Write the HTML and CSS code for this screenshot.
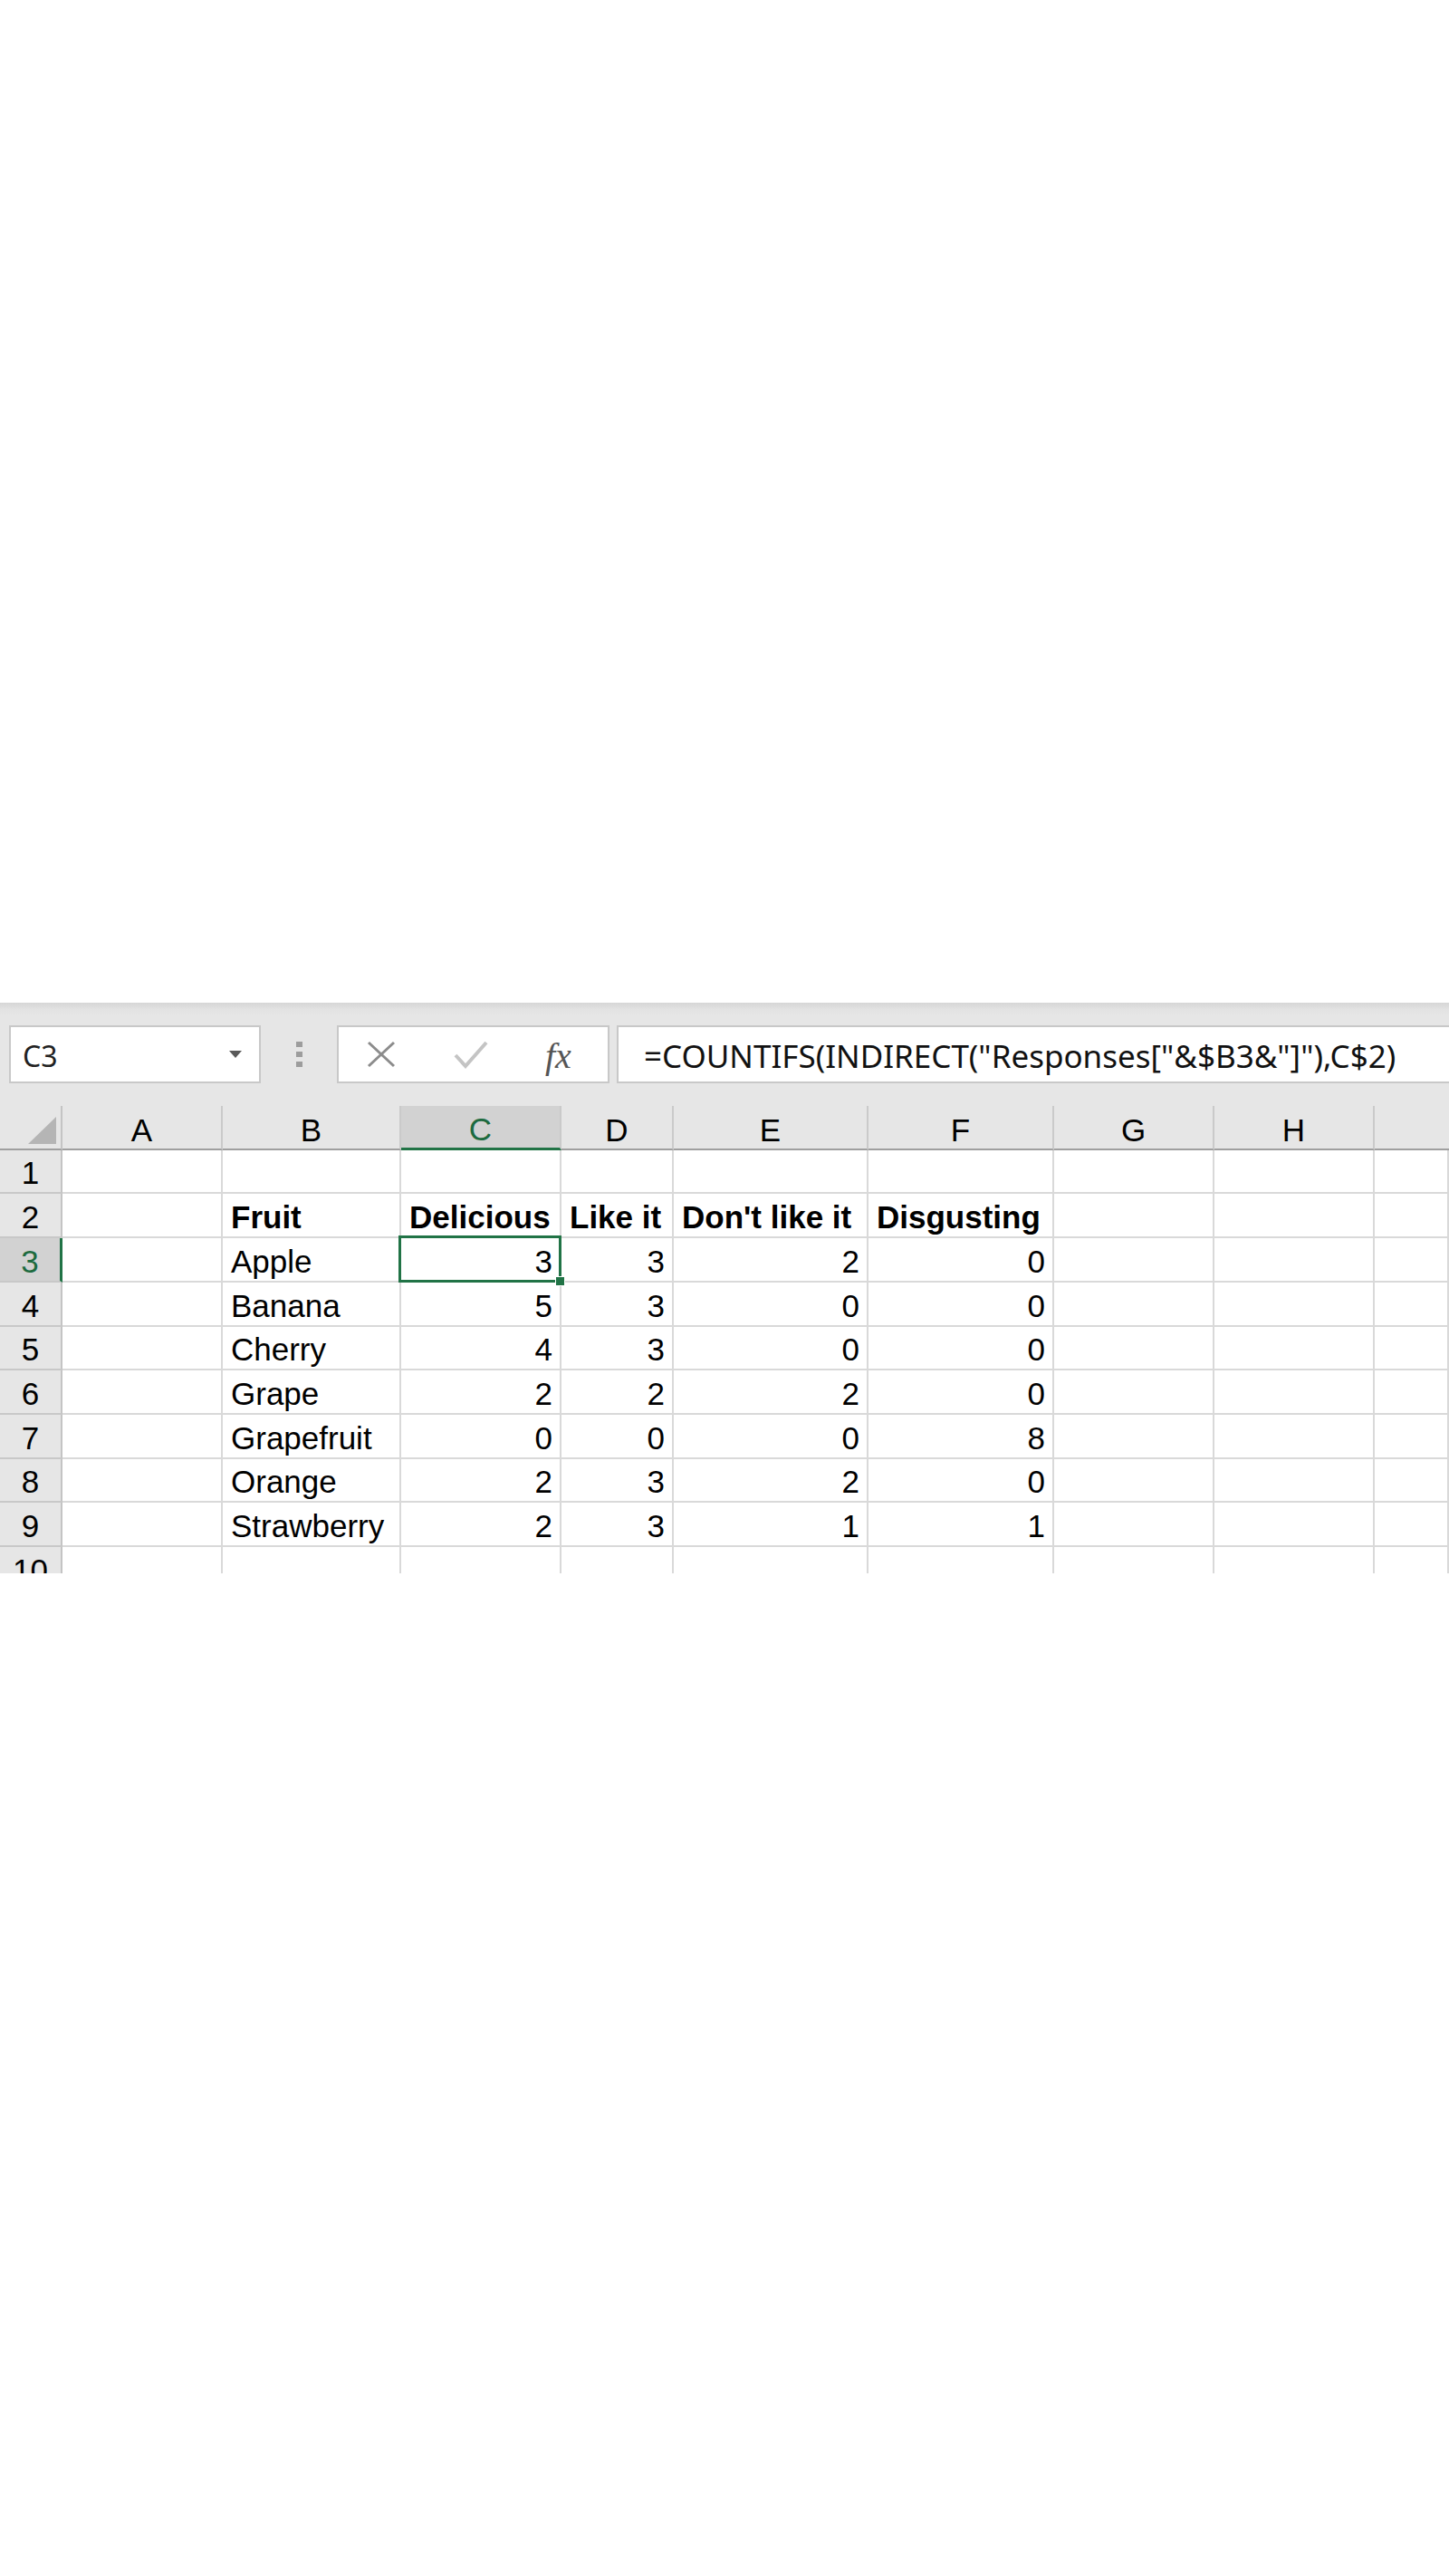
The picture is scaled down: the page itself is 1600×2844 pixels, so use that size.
FILE: index.html
```html
<!DOCTYPE html>
<html>
<head>
<meta charset="utf-8">
<link rel="stylesheet" href="styles.css">
</head>
<body>
<div class="page">
  <div class="spacer"></div>
  <div class="excel">
    <div class="toolbar">
      <div class="namebox">
        <span class="name">C3</span>
        <svg class="caret" width="16" height="10" viewBox="0 0 16 10"><polygon points="1,1 15,1 8,9" fill="#5a5a5a"/></svg>
      </div>
      <div class="grip"><i></i><i></i><i></i></div>
      <div class="fxbox">
        <svg class="ico-x" width="34" height="30" viewBox="0 0 34 30"><path d="M3 2 L31 28 M31 2 L3 28" stroke="#8c8c8c" stroke-width="3" fill="none"/></svg>
        <svg class="ico-ok" width="40" height="32" viewBox="0 0 40 32"><path d="M3 17 L14 29 L37 3" stroke="#c4c4c4" stroke-width="4" fill="none"/></svg>
        <span class="fx">fx</span>
      </div>
      <div class="formula">=COUNTIFS(INDIRECT("Responses["&amp;$B3&amp;"]"),C$2)</div>
    </div>
    <div class="sheet">
      <div class="ch corner"><svg width="69" height="49" viewBox="0 0 69 49"><polygon points="31,42 62,42 62,12" fill="#b5b5b5"/></svg></div>
      <div class="ch">A</div><div class="ch">B</div><div class="ch sel">C</div><div class="ch">D</div><div class="ch">E</div><div class="ch">F</div><div class="ch">G</div><div class="ch">H</div><div class="ch last"></div>

      <div class="rh">1</div><div class="c"></div><div class="c"></div><div class="c"></div><div class="c"></div><div class="c"></div><div class="c"></div><div class="c"></div><div class="c"></div><div class="c"></div>

      <div class="rh">2</div><div class="c"></div><div class="c b">Fruit</div><div class="c b">Delicious</div><div class="c b">Like it</div><div class="c b">Don't like it</div><div class="c b">Disgusting</div><div class="c"></div><div class="c"></div><div class="c"></div>

      <div class="rh sel">3</div><div class="c"></div><div class="c">Apple</div><div class="c n active">3</div><div class="c n">3</div><div class="c n">2</div><div class="c n">0</div><div class="c"></div><div class="c"></div><div class="c"></div>

      <div class="rh">4</div><div class="c"></div><div class="c">Banana</div><div class="c n">5</div><div class="c n">3</div><div class="c n">0</div><div class="c n">0</div><div class="c"></div><div class="c"></div><div class="c"></div>

      <div class="rh">5</div><div class="c"></div><div class="c">Cherry</div><div class="c n">4</div><div class="c n">3</div><div class="c n">0</div><div class="c n">0</div><div class="c"></div><div class="c"></div><div class="c"></div>

      <div class="rh">6</div><div class="c"></div><div class="c">Grape</div><div class="c n">2</div><div class="c n">2</div><div class="c n">2</div><div class="c n">0</div><div class="c"></div><div class="c"></div><div class="c"></div>

      <div class="rh">7</div><div class="c"></div><div class="c">Grapefruit</div><div class="c n">0</div><div class="c n">0</div><div class="c n">0</div><div class="c n">8</div><div class="c"></div><div class="c"></div><div class="c"></div>

      <div class="rh">8</div><div class="c"></div><div class="c">Orange</div><div class="c n">2</div><div class="c n">3</div><div class="c n">2</div><div class="c n">0</div><div class="c"></div><div class="c"></div><div class="c"></div>

      <div class="rh">9</div><div class="c"></div><div class="c">Strawberry</div><div class="c n">2</div><div class="c n">3</div><div class="c n">1</div><div class="c n">1</div><div class="c"></div><div class="c"></div><div class="c"></div>

      <div class="rh">10</div><div class="c"></div><div class="c"></div><div class="c"></div><div class="c"></div><div class="c"></div><div class="c"></div><div class="c"></div><div class="c"></div><div class="c"></div>
    </div>
  </div>
</div>
</body>
</html>
```
FILE: styles.css
```css
* { box-sizing: border-box; }
html, body { margin: 0; padding: 0; background: #ffffff; }
body { width: 1600px; height: 2844px; overflow: hidden; font-family: "Liberation Sans", Arial, sans-serif; }

.page { display: flex; flex-direction: column; }
.spacer { height: 1107px; }

.toolbar {
  height: 114px;
  background: linear-gradient(#d6d6d6 0px, #e3e3e3 8px, #e6e6e6 14px);
  display: flex;
  align-items: flex-start;
  padding: 25px 0 0 10px;
}
.namebox {
  width: 278px; height: 64px;
  background: #fff;
  border: 2px solid #c8c8c8;
  display: flex; align-items: center; justify-content: space-between;
  padding: 3px 18px 0 13px;
  font-family: "Noto Sans", "Open Sans", sans-serif;
  font-size: 32px; color: #222;
}
.caret { margin-top: -3px; }
.grip {
  margin-left: 38px; width: 8px; height: 64px;
  display: flex; flex-direction: column; align-items: center; justify-content: center; gap: 5px;
}
.grip i { display: block; width: 7px; height: 6px; background: #9d9d9d; }
.fxbox {
  margin-left: 38px;
  width: 301px; height: 64px;
  background: #fff;
  border: 2px solid #c8c8c8;
  display: flex; align-items: center;
  padding-left: 30px;
}
.ico-ok { margin-left: 62px; }
.fx {
  margin-left: 62px;
  font-family: "Liberation Serif", "DejaVu Serif", serif;
  font-style: italic;
  font-size: 40px;
  color: #555;
  margin-top: 2px;
}
.formula {
  margin-left: 8px;
  flex: 1;
  height: 64px;
  background: #fff;
  border: 2px solid #c8c8c8;
  border-right: none;
  padding: 7px 0 0 28px;
  font-family: "Noto Sans", "Open Sans", sans-serif;
  font-size: 35px;
  line-height: 50px;
  color: #111;
  white-space: nowrap;
  overflow: hidden;
}

.sheet {
  display: grid;
  grid-template-columns: 69px 177px 197px 177px 124px 215px 205px 177px 177px 82px;
  grid-template-rows: 49px 48px 49px 49px 49px 48px 49px 49px 48px 49px 49px;
  height: 516px;
  overflow: hidden;
  background: #e6e6e6;
}
.ch {
  background: #e6e6e6;
  border-right: 2px solid #cacaca;
  border-bottom: 2px solid #9f9f9f;
  display: flex; align-items: center; justify-content: center;
  font-size: 35px; color: #000;
  padding-top: 6px;
}
.ch.corner { border-right: 2px solid #c4c4c4; display: block; padding: 0; }
.ch.corner svg { display: block; }
.ch.last { border-right: none; }
.ch.sel {
  background: #d2d2d2;
  border-bottom: 3px solid #217346;
  color: #1d6b3f;
}
.rh {
  background: #e6e6e6;
  border-right: 2px solid #c4c4c4;
  border-bottom: 2px solid #c8c8c8;
  display: flex; align-items: center; justify-content: center;
  font-size: 35px; color: #000;
  padding-top: 4px;
}
.rh.sel {
  background: #d2d2d2;
  border-right: 3px solid #217346;
  color: #1d6b3f;
}
.c {
  background: #fff;
  border-right: 2px solid #d9d9d9;
  border-bottom: 2px solid #d9d9d9;
  display: flex; align-items: center;
  padding: 4px 8px 0 9px;
  font-size: 35px; color: #000;
  white-space: nowrap;
}
.c.b { font-weight: bold; }
.c.n { justify-content: flex-end; padding-right: 8px; }
.c.active { position: relative; }
.c.active::after {
  content: "";
  position: absolute;
  left: -3px; top: -3px; right: -2px; bottom: -2px;
  border: 3px solid #217346;
}
.c.active::before {
  content: "";
  position: absolute;
  right: -6px; bottom: -6px;
  width: 9px; height: 9px;
  background: #217346;
  border: 1px solid #fff;
  z-index: 2;
}
```
